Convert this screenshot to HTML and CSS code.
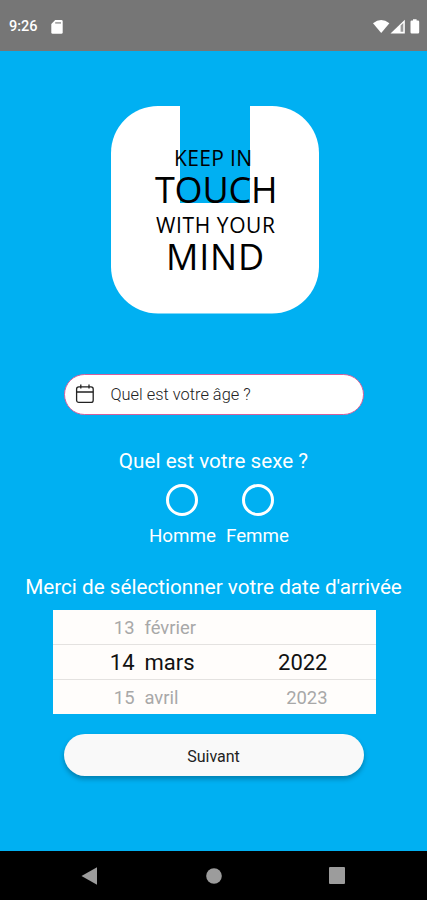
FILE: index.html
```html
<!DOCTYPE html>
<html lang="fr">
<head>
    <meta charset="UTF-8">
    <meta name="viewport" content="width=device-width, initial-scale=1.0">
    <title>Keep in touch with your mind</title>
    <link rel="stylesheet" href="styles.css">
</head>
<body>
    <header class="status-bar">
        <span class="clock">9:26</span>
        <svg class="sd-icon" width="12" height="14" viewBox="0 0 12 14">
            <path d="M4.2 0H10.3Q11.7 0 11.7 1.4V12.4Q11.7 13.8 10.3 13.8H1.7Q.3 13.8 .3 12.4V4Z" fill="#fff"/>
            <path d="M4.2 2.9H10" stroke="#999" stroke-width="1.5"/>
        </svg>
        <svg class="system-icons" width="48" height="16" viewBox="0 0 48 16">
            <path d="M0 4.2Q8.2-2.4 16.4 4.2L8.2 14Z" fill="#fff"/>
            <path d="M17.5 14.4L31.8 .8V14.4Z" fill="#fff"/>
            <path d="M27.6 6.5L30.3 4V12.8H27.6Z" fill="#999"/>
            <path d="M40 1.5V.2H43.6V1.5H45Q46.2 1.5 46.2 2.7V13.2Q46.2 14.4 45 14.4H38.7Q37.5 14.4 37.5 13.2V2.7Q37.5 1.5 38.7 1.5Z" fill="#fff"/>
        </svg>
    </header>

    <main class="container">
        <svg class="logo" width="210" height="208" viewBox="0 0 210 208">
            <rect x="2" width="208" height="207.5" rx="47" fill="#fff"/>
            <rect class="logo-band" x="71" y="0" width="70" height="97"/>
            <text class="small" x="65" y="59.5" textLength="78">KEEP IN</text>
            <text class="big" x="46" y="96.5" textLength="122.5">TOUCH</text>
            <text class="small" x="47" y="126.5" textLength="119">WITH YOUR</text>
            <text class="big" x="57" y="163.5" textLength="98">MIND</text>
        </svg>

        <div class="age-field">
            <svg width="20" height="20" viewBox="0 0 20 20" fill="none" stroke="#222" stroke-width="1.3">
                <rect x="1.6" y="2.8" width="16.6" height="15.6" rx="2.2"/>
                <path d="M1.6 8H18.2M5.8 .6V4.6M14 .6V4.6"/>
            </svg>
            <span>Quel est votre âge ?</span>
        </div>

        <h2 class="sex-title">Quel est votre sexe ?</h2>
        <div class="sex-options">
            <label class="option"><span class="radio"></span>Homme</label>
            <label class="option"><span class="radio"></span>Femme</label>
        </div>

        <h2 class="date-title">Merci de sélectionner votre date d'arrivée</h2>
        <div class="date-picker">
            <div class="date-row">
                <span class="day">13</span><span class="month">février</span><span class="year"></span>
            </div>
            <div class="date-row selected">
                <span class="day">14</span><span class="month">mars</span><span class="year">2022</span>
            </div>
            <div class="date-row">
                <span class="day">15</span><span class="month">avril</span><span class="year">2023</span>
            </div>
        </div>

        <button class="next-btn">Suivant</button>
    </main>

    <nav class="nav-bar">
        <svg width="17" height="18" viewBox="0 0 17 18"><path d="M.5 9L16 .3V17.7Z"/></svg>
        <svg width="16" height="16" viewBox="0 0 16 16"><circle cx="8" cy="8" r="7.8"/></svg>
        <svg width="16" height="17" viewBox="0 0 16 17"><rect width="16" height="17" rx="1"/></svg>
    </nav>
</body>
</html>
```
FILE: styles.css
```css
* {
    box-sizing: border-box;
}

body {
    margin: 0;
    height: 900px;
    display: flex;
    flex-direction: column;
    background-color: #00b0f2;
    color: #ffffff;
    font-family: Roboto, sans-serif;
}

.status-bar {
    height: 51px;
    padding: 2px 6px 0 9px;
    display: flex;
    align-items: center;
    background-color: #767676;
}

.clock {
    width: 42px;
    font-size: 14.5px;
    font-weight: 500;
}

.system-icons {
    margin-left: auto;
}

.container {
    flex: 1;
    display: flex;
    flex-direction: column;
    align-items: center;
}

.logo {
    margin-top: 54.5px;
    flex-shrink: 0;
    font-family: "Open Sans", sans-serif;
}

.logo-band {
    fill: #00b0f2;
}

.logo .small {
    font-size: 21px;
}

.logo .big {
    font-size: 36px;
}

.age-field {
    width: 300px;
    height: 41px;
    margin-top: 60.5px;
    padding-left: 10px;
    display: flex;
    align-items: center;
    gap: 16px;
    border: 1px solid #d4609c;
    border-radius: 21px;
    background-color: #ffffff;
    color: #222222;
    font-size: 16.4px;
    font-weight: 300;
}

.age-field svg {
    margin-top: -2px;
}

h2 {
    margin: 0;
    font-size: 20.7px;
    font-weight: 400;
    line-height: 24px;
    white-space: nowrap;
}

.sex-title {
    margin-top: 34px;
}

.sex-options {
    display: flex;
    gap: 10px;
    margin: 11px 0 0 11px;
}

.option {
    display: flex;
    flex-direction: column;
    align-items: center;
    gap: 8px;
    font-size: 18.8px;
    line-height: 24px;
}

.radio {
    width: 32px;
    height: 32px;
    border: 3px solid #ffffff;
    border-radius: 50%;
}

.date-title {
    margin-top: 27px;
}

.date-picker {
    width: 323px;
    height: 104px;
    margin: 11px 0 0 1px;
    background-color: #fffdfb;
}

.date-row {
    height: 34px;
    display: flex;
    align-items: center;
    padding: 1px 48px 0 0;
    color: #a8a8a8;
    font-size: 18.4px;
}

.date-row.selected {
    height: 36px;
    padding-top: 0;
    border-top: 1px solid #e4e2e0;
    border-bottom: 1px solid #e4e2e0;
    color: #111111;
    font-size: 22px;
}

.day {
    width: 82px;
    text-align: right;
}

.month {
    margin-left: 10px;
}

.year {
    margin-left: auto;
}

.next-btn {
    width: 300px;
    height: 42px;
    margin-top: 20px;
    padding-top: 3px;
    border: none;
    border-radius: 21px;
    background-color: #f9f9f9;
    box-shadow: 0 3px 5px rgba(0, 0, 0, 0.28);
    color: #222222;
    font-family: inherit;
    font-size: 16px;
}

.nav-bar {
    height: 49px;
    padding: 0 82px 0 81px;
    display: flex;
    justify-content: space-between;
    align-items: center;
    background-color: #000000;
    fill: #9c9c9c;
}
```
